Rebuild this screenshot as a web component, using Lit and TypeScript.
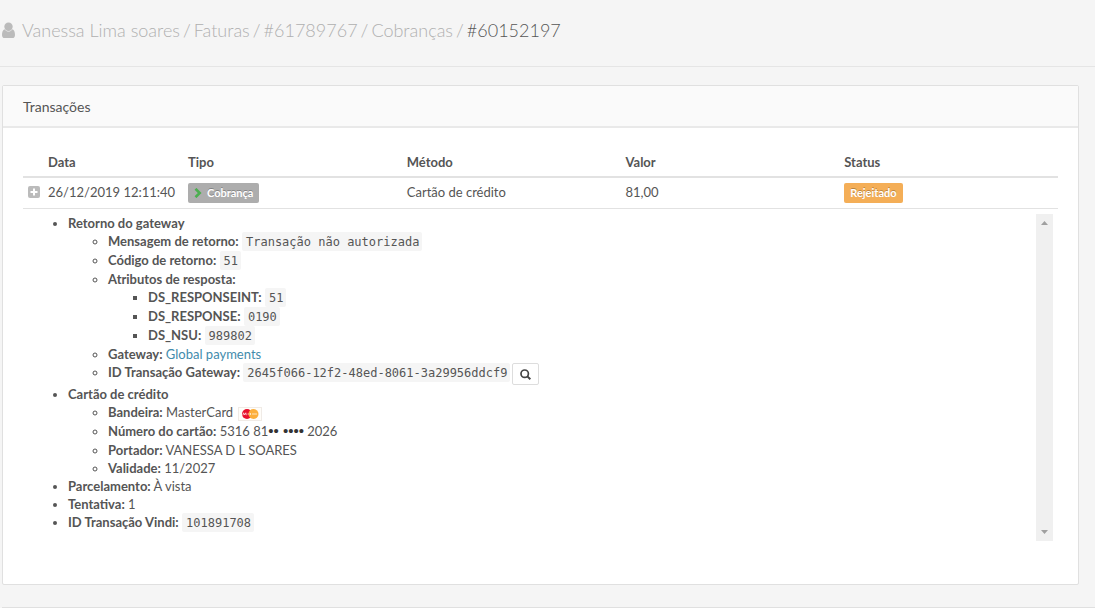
import { LitElement, html, css, svg } from "lit";
import { customElement } from "lit/decorators.js";

const columns = ["Data", "Tipo", "Método", "Valor", "Status"];
const crumbs = ["Vanessa Lima soares", "Faturas", "#61789767", "Cobranças"];

@customElement("app-root")
export class AppRoot extends LitElement {
  static styles = css`
    :host {
      display: block;
      box-sizing: border-box;
      min-height: 100vh;
      overflow: hidden;
      background: #f5f5f5;
      color: #555;
      font: 400 13px/18px Lato, sans-serif;
    }
    *, *::before { box-sizing: border-box; }
    a { text-decoration: none; color: #428bac; }
    .top {
      display: flex;
      align-items: center;
      height: 67px;
      padding: 0 2px 6px;
      border-bottom: 1px solid #e5e5e5;
    }
    .user { width: 13px; height: 16px; fill: #bbb; margin-right: 7px; flex: none; }
    h1 {
      display: flex;
      gap: 3px;
      margin: 0;
      font-size: 18px;
      line-height: 24px;
      font-weight: 300;
      color: #b0b0b0;
      white-space: nowrap;
    }
    h1 a { color: #b0b0b0; }
    h1 .current { color: #555; }
    .panel {
      margin: 18px 16px 22px 2px;
      background: #fff;
      border: 1px solid #e0e0e0;
      border-radius: 2px;
    }
    h2 {
      margin: 0;
      padding: 12px 20px 10px;
      background: #fafafa;
      border-bottom: 2px solid #e9e9e9;
      font-size: 14px;
      line-height: 18px;
      font-weight: 400;
    }
    .body { padding: 20px 20px 38px; }
    table { width: 100%; table-layout: fixed; border-spacing: 0; }
    th, td { padding: 5px; text-align: left; vertical-align: top; }
    th { font-weight: 700; border-bottom: 2px solid #e2e2e2; }
    .row td { border-bottom: 1px solid #e2e2e2; }
    .c-toggle { width: 20px; }
    .c-date { width: 140px; }
    .date { white-space: nowrap; }
    button { font: inherit; padding: 0; cursor: pointer; }
    .toggle { display: block; width: 12px; height: 12px; margin-top: 3px; border: 0; background: none; }
    .toggle svg { display: block; }
    .badge {
      display: flex;
      width: fit-content;
      align-items: center;
      height: 20px;
      padding: 0 6px;
      border-radius: 2px;
      color: #fff;
      font-size: 11px;
      line-height: 20px;
      font-weight: 700;
      text-shadow: 0 -1px 0 rgba(0, 0, 0, 0.25);
    }
    .grey { background: #adadad; }
    .grey svg { margin-right: 5px; }
    .orange { background: #f4ae57; }
    .detail { display: flex; align-items: stretch; justify-content: space-between; }
    .bar {
      width: 17px;
      min-height: 327px;
      background: #f0f0f0;
      display: flex;
      flex-direction: column;
      justify-content: space-between;
      align-items: center;
      padding: 7px 0;
      fill: #a0a0a0;
    }
    ul { margin: 0; padding: 0 0 0 40px; }
    ul ul { font-weight: 400; }
    .coded { line-height: 19px; }
    b { font-weight: 700; }
    code {
      display: inline-block;
      font: 12px/17px "DejaVu Sans Mono", monospace;
      height: 19px;
      padding: 2px 3px 0 4px;
      border-radius: 2px;
      background: #f5f5f5;
      vertical-align: top;
    }
    .search {
      display: inline-flex;
      align-items: center;
      justify-content: center;
      width: 27px;
      height: 22px;
      margin-left: 2px;
      border: 1px solid #ddd;
      border-radius: 2px;
      background: #fff;
      vertical-align: top;
    }
    .brand { vertical-align: middle; margin-left: 2px; }
    .number { line-height: 20px; }
    .dots { color: #333; font: 15px/16px "Liberation Sans", sans-serif; }
    .next { border-top: 1px solid #e0e0e0; margin-left: 2px; }
  `;

  private arrow(up: boolean) {
    return html`<svg width="7" height="4" viewBox="0 0 7 4" aria-hidden="true">
      ${up ? svg`<path d="M3.5 0 7 4H0Z" />` : svg`<path d="M0 0h7L3.5 4Z" />`}
    </svg>`;
  }

  render() {
    return html`
      <header class="top">
        <svg class="user" viewBox="0 0 13 16" aria-hidden="true">
          <circle cx="6.5" cy="4.7" r="4.2" />
          <path d="M2.600 7.200C.8 7.600 0 10 0 12.900C0 14.800 1 16 2.500 16h8c1.500 0 2.500-1.200 2.500-3.100C13 10 12.200 7.600 10.400 7.200 9.200 8.700 8 9.500 6.500 9.500S3.800 8.700 2.600 7.200Z" />
        </svg>
        <h1>
          ${crumbs.map((c) => html`<a href="#">${c}</a><span>/</span>`)}
          <span class="current">#60152197</span>
        </h1>
      </header>
      <section class="panel">
        <h2>Transações</h2>
        <div class="body">
          <table>
            <colgroup><col class="c-toggle" /><col class="c-date" /><col /><col /><col /><col /></colgroup>
            <thead>
              <tr><th></th>${columns.map((c) => html`<th scope="col">${c}</th>`)}</tr>
            </thead>
            <tbody>
              <tr class="row">
                <td>
                  <button class="toggle" aria-label="Detalhes">
                    <svg width="12" height="12" viewBox="0 0 12 12">
                      <rect width="12" height="12" rx="2" fill="#bbb" />
                      <path d="M6 2.500v7M2.500 6h7" stroke="#fff" stroke-width="2" />
                    </svg>
                  </button>
                </td>
                <td class="date">26/12/2019 12:11:40</td>
                <td>
                  <span class="badge grey">
                    <svg width="8" height="10" viewBox="0 0 8 10" aria-hidden="true"><path d="M1.500 .8 5.700 5 1.500 9.200" fill="none" stroke="#4caf50" stroke-width="2.600" /></svg>Cobrança</span>
                </td>
                <td>Cartão de crédito</td>
                <td>81,00</td>
                <td><span class="badge orange">Rejeitado</span></td>
              </tr>
              <tr>
                <td colspan="6">
                  <div class="detail">
                    <ul>
                      <li><b>Retorno do gateway</b>
                        <ul>
                          <li class="coded"><b>Mensagem de retorno:</b> <code>Transação não autorizada</code></li>
                          <li class="coded"><b>Código de retorno:</b> <code>51</code></li>
                          <li><b>Atributos de resposta:</b>
                            <ul>
                              <li class="coded"><b>DS_RESPONSEINT:</b> <code>51</code></li>
                              <li class="coded"><b>DS_RESPONSE:</b> <code>0190</code></li>
                              <li class="coded"><b>DS_NSU:</b> <code>989802</code></li>
                            </ul>
                          </li>
                          <li><b>Gateway:</b> <a href="#">Global payments</a></li>
                          <li class="coded"><b>ID Transação Gateway:</b> <code>2645f066-12f2-48ed-8061-3a29956ddcf9</code><button class="search" aria-label="Buscar">
                              <svg width="11" height="11" viewBox="0 0 11 11" fill="none" stroke="#444"><circle cx="4.700" cy="4.700" r="3.700" stroke-width="1.700" /><path d="M7.400 7.400 10.300 10.300" stroke-width="2" /></svg>
                            </button>
                          </li>
                        </ul>
                      </li>
                      <li><b>Cartão de crédito</b>
                        <ul>
                          <li><b>Bandeira:</b> MasterCard
                            <svg class="brand" width="24" height="14" viewBox="0 0 24 14" role="img" aria-label="MasterCard">
                              <rect x=".5" y=".5" width="23" height="13" fill="#fffdf9" stroke="#f0ebe6" />
                              <circle cx="9" cy="7" r="5" fill="#e8112d" />
                              <circle cx="15.500" cy="7" r="5" fill="#fcaf3c" />
                              <path d="M4.800 8.300 5.600 5.800 6.600 8 7.800 5.800 8.300 8.200M9.500 7h2M12.500 6v2M14 7h5" fill="none" stroke="#fff" stroke-width=".9" opacity=".75" />
                            </svg>
                          </li>
                          <li class="number"><b>Número do cartão:</b> 5316 81<span class="dots">•• ••••</span> 2026</li>
                          <li><b>Portador:</b> VANESSA D L SOARES</li>
                          <li><b>Validade:</b> 11/2027</li>
                        </ul>
                      </li>
                      <li><b>Parcelamento:</b> À vista</li>
                      <li><b>Tentativa:</b> 1</li>
                      <li class="coded"><b>ID Transação Vindi:</b> <code>101891708</code></li>
                    </ul>
                    <div class="bar" aria-hidden="true">${this.arrow(true)}${this.arrow(false)}</div>
                  </div>
                </td>
              </tr>
            </tbody>
          </table>
        </div>
      </section>
      <div class="next"></div>
    `;
  }
}
